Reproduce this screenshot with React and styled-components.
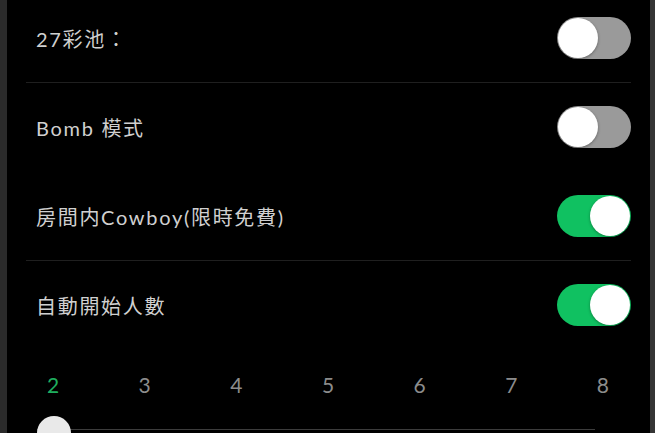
import styled, { createGlobalStyle } from "styled-components";

const GlobalStyle = createGlobalStyle`
  html, body {
    margin: 0;
    padding: 0;
    background: #000;
    overflow: hidden;
  }
  body {
    font-family: "Lato", "Noto Sans CJK TC", sans-serif;
  }
`;

const Screen = styled.div`
  display: flex;
  width: 655px;
  height: 433px;
  background: #000;
  overflow: hidden;
`;

const EdgeLeft = styled.div`
  width: 7px;
  flex-shrink: 0;
  background: #2b2b2b;
`;

const EdgeRight = styled.div`
  width: 5px;
  flex-shrink: 0;
  margin-left: 2px;
  background: #353535;
`;

const Panel = styled.div`
  flex: 1;
  padding: 0 17px 0 19px;
  display: flex;
  flex-direction: column;
`;

const List = styled.div`
  margin-top: -6px;
  display: flex;
  flex-direction: column;
`;

const Row = styled.div`
  height: 88px;
  display: flex;
  align-items: center;
  justify-content: space-between;
  padding-left: 10px;
  border-bottom: 1px solid ${({ $divider }) => ($divider ? "#1f1f1f" : "transparent")};
`;

const Label = styled.span`
  font-size: 20px;
  color: #d0d0d0;
  letter-spacing: 1.7px;
`;

const Toggle = styled.div`
  width: 74px;
  height: 42px;
  border-radius: 21px;
  background: ${({ $on }) => ($on ? "#10c161" : "#9a9a9a")};
  display: flex;
  align-items: center;
  justify-content: ${({ $on }) => ($on ? "flex-end" : "flex-start")};
  padding: 0 1px;
  box-sizing: border-box;
`;

const Knob = styled.div`
  width: 40px;
  height: 40px;
  border-radius: 50%;
  background: #fff;
  box-shadow: 0 1px 3px rgba(0, 0, 0, 0.35);
`;

const Scale = styled.div`
  margin: 23px 18px 0 17px;
  display: flex;
  justify-content: space-between;
`;

const Tick = styled.span`
  width: 20px;
  text-align: center;
  font-size: 21px;
  line-height: 24px;
  color: ${({ $active }) => ($active ? "#1fae5f" : "#8c8c8c")};
`;

const Slider = styled.div`
  position: relative;
  margin: 22px 36px 0 11px;
  height: 40px;
`;

const Track = styled.div`
  margin-top: 10px;
  height: 1px;
  background: #3c3c3c;
`;

const Thumb = styled.div`
  position: absolute;
  left: 0;
  top: -3px;
  width: 34px;
  height: 34px;
  border-radius: 50%;
  background: #e9e9e9;
`;

const settings = [
  { label: "27彩池：", on: false, divider: true },
  { label: "Bomb 模式", on: false, divider: false },
  { label: "房間内Cowboy(限時免費)", on: true, divider: true },
  { label: "自動開始人數", on: true, divider: false },
];

const ticks = [2, 3, 4, 5, 6, 7, 8];

const App = () => {
  return (
    <Screen>
      <GlobalStyle />
      <EdgeLeft />
      <Panel>
        <List>
          {settings.map((s) => (
            <Row key={s.label} $divider={s.divider}>
              <Label>{s.label}</Label>
              <Toggle $on={s.on}>
                <Knob />
              </Toggle>
            </Row>
          ))}
        </List>
        <Scale>
          {ticks.map((t) => (
            <Tick key={t} $active={t === 2}>{t}</Tick>
          ))}
        </Scale>
        <Slider>
          <Track />
          <Thumb />
        </Slider>
      </Panel>
      <EdgeRight />
    </Screen>
  );
};

export default App;
